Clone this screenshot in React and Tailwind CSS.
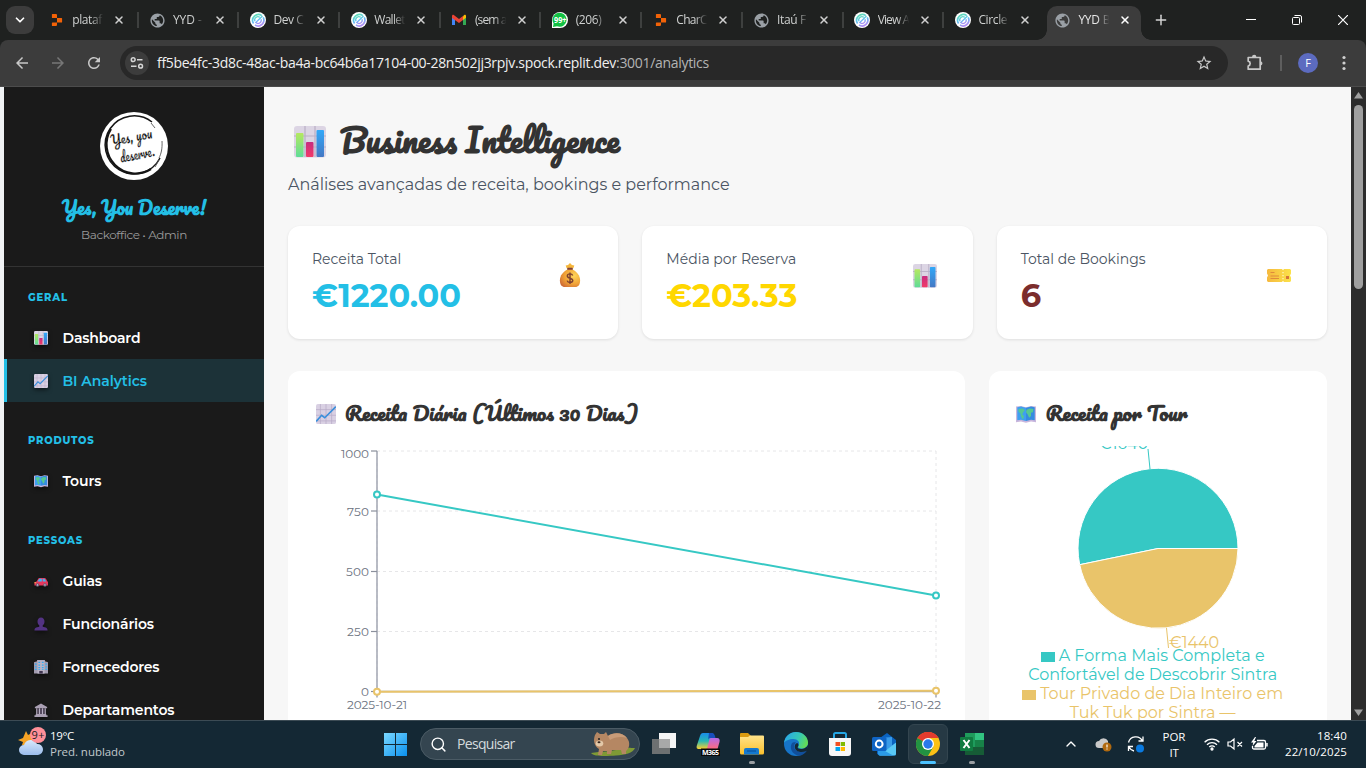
import React, { useLayoutEffect, useRef, useState } from "react";
import { MdPublic, MdArrowBack, MdArrowForward, MdRefresh, MdStarBorder } from "react-icons/md";
import { ChevronDown, ChevronUp, Plus, Search, X } from "lucide-react";

const MONT = "font-['Montserrat','Inter',sans-serif]";
const SEGOE = "font-['Open_Sans','Noto_Sans',sans-serif]";
const SCRIPT = "font-['Pacifico','Liberation_Serif',serif] whitespace-nowrap";

/* Text spaced so that its run is exactly w pixels wide */
function Fit({ w, className = "", children }) {
  const ref = useRef(null);
  const [gap, setGap] = useState(0);
  useLayoutEffect(() => {
    const el = ref.current;
    el.style.letterSpacing = "0px";
    const natural = el.getBoundingClientRect().width;
    const next = (w - natural) / Math.max(1, el.textContent.length - 0.5);
    el.style.letterSpacing = next + "px";
    setGap(next);
  }, [w]);
  return (
    <span ref={ref} className={"inline-block whitespace-nowrap " + className} style={{ letterSpacing: gap + "px" }}>
      {children}
    </span>
  );
}

/* ---------- emoji ---------- */
function BarsEmoji({ className }) {
  return (
    <svg viewBox="0 0 32 32" className={className}>
      <rect width="32" height="31.5" rx="3" fill="#dcd5e4" />
      <path d="M11 0v31M21 0v31M0 10h32M0 21h32" stroke="#b9b0c6" strokeWidth="1.2" />
      <linearGradient id="gr" x1="0" y1="0" x2="0" y2="1"><stop stopColor="#b5e860" /><stop offset="1" stopColor="#5fdc98" /></linearGradient>
      <linearGradient id="pk" x1="0" y1="0" x2="0" y2="1"><stop stopColor="#c72c80" /><stop offset="1" stopColor="#f23a68" /></linearGradient>
      <linearGradient id="bl" x1="0" y1="0" x2="0" y2="1"><stop stopColor="#32a8f8" /><stop offset="1" stopColor="#4478c4" /></linearGradient>
      <rect x="2" y="7" width="7.5" height="24" rx="1" fill="url(#gr)" />
      <rect x="12" y="16" width="7.5" height="15" rx="1" fill="url(#pk)" />
      <rect x="22.5" y="4" width="7.5" height="27" rx="1" fill="url(#bl)" />
    </svg>
  );
}
function LineEmoji({ className }) {
  return (
    <svg viewBox="0 0 32 32" className={className}>
      <rect width="32" height="32" rx="3" fill="#d9d0e3" />
      <path d="M7 0v32M16 0v32M25 0v32M0 9h32M0 18h32M0 27h32" stroke="#b8acc8" strokeWidth="1.2" />
      <path d="M1 27 9 18l5 4L31 5" fill="none" stroke="#3a8fdb" strokeWidth="2.6" strokeLinecap="round" />
    </svg>
  );
}
function MapEmoji({ className }) {
  return (
    <svg viewBox="0 0 32 32" className={className}>
      <path d="M0 4l8-1 8 2 8-2 8 1v25l-8-1-8 2-8-2-8 1z" fill="#c9b6dc" />
      <path d="M2 5l6-1 8 2v21l-8-2-6 1z" fill="#3f9ff0" />
      <path d="M16 6l8-2 6 1v21l-6-1-8 2z" fill="#358ce0" />
      <path d="M4 8l7-1 3 3-3 4-1 3 3 2-2 6-3-5-1-5-3-3zM17 9l5-2 6 1-1 5-3 1 0 5-3 3-2-5-3-4z" fill="#55c892" />
    </svg>
  );
}
function BagEmoji({ className }) {
  return (
    <svg viewBox="0 0 22 26" className={className}>
      <radialGradient id="bag" cx=".7" cy=".35" r=".8"><stop stopColor="#ffd65a" /><stop offset=".6" stopColor="#f0a136" /><stop offset="1" stopColor="#cf6c35" /></radialGradient>
      <path d="M11 0l2 2 2.500.5-1 3h-7l-1-3L9 2z" fill="#f5b63c" />
      <rect x="8" y="5" width="6" height="2.500" rx="1" fill="#804138" />
      <path d="M8 7h6c4 2 7.500 6 7.500 11 0 5-2 7-5 7h-11c-3 0-5-2-5-7C.5 13 4 9 8 7z" fill="url(#bag)" />
      <path d="M13.800 13c-.5-1.300-1.500-1.700-2.800-1.700-1.700 0-2.800.8-2.800 2.200 0 3 5.700 1.700 5.700 4.500 0 1.500-1.200 2.300-2.900 2.300-1.600 0-2.700-.8-3-2M11 9.800v12" fill="none" stroke="#7d4030" strokeWidth="1.500" />
    </svg>
  );
}
function TicketEmoji({ className }) {
  return (
    <svg viewBox="0 0 24 13" className={className}>
      <linearGradient id="tk"><stop stopColor="#f6b93f" /><stop offset="1" stopColor="#fbe249" /></linearGradient>
      <path d="M1 0h14l1 1.200L17 0h6l1 1v3.500l-1 2 1 2V12l-1 1h-6l-1-1.200L15 13H1l-1-1V8.500l1-2-1-2V1z" fill="url(#tk)" />
      <path d="M3.500 3.500h4M3.500 7h8.500M3.500 9.500h8.500" stroke="#df8a3c" strokeWidth="1.200" />
      <path d="M16 3v1.300M16 6v1.300M16 9v1.300" stroke="#fff6c8" strokeWidth="1.200" />
      <rect x="19" y="7" width="3" height="3" fill="#d6743a" />
    </svg>
  );
}
function CarEmoji({ className }) {
  return (
    <svg viewBox="0 0 32 32" className={className}>
      <path d="M1 19l5-2 4-7c1-1 2-1 4-1h10c3 0 4 2 6 7l2 2v8H1z" fill="#e8365c" />
      <path d="M8 17l4-6h6v6zM20 11h4l4 6h-8z" fill="#45b3f2" />
      <circle cx="8" cy="25" r="4" fill="#6b5d7a" /><circle cx="8" cy="25" r="1.500" fill="#ddd" />
      <circle cx="25" cy="25" r="4" fill="#6b5d7a" /><circle cx="25" cy="25" r="1.500" fill="#ddd" />
      <path d="M1 20h4" stroke="#ffc94d" strokeWidth="2" />
    </svg>
  );
}
function PersonEmoji({ className }) {
  return (
    <svg viewBox="0 0 32 32" className={className}>
      <path d="M16 1c5 0 8 4 8 9s-2 7-4 9v3l7 2c3 1 4 4 4 7H1c0-3 1-6 4-7l7-2v-3c-2-2-4-4-4-9s3-9 8-9z" fill="#533383" />
    </svg>
  );
}
function OfficeEmoji({ className }) {
  return (
    <svg viewBox="0 0 32 32" className={className}>
      <path d="M0 5l7-2V0h18v3l7 2v26H0z" fill="#a29baf" />
      <path d="M8 1h16v30H8z" fill="#bbb4c6" />
      <path d="M2 8h4v3H2zM2 14h4v3H2zM2 20h4v3H2zM10 4h4v3h-4zM18 4h4v3h-4zM10 10h4v3h-4zM18 10h4v3h-4zM10 16h4v3h-4zM18 16h4v3h-4zM26 8h4v3h-4zM26 14h4v3h-4zM26 20h4v3h-4zM10 21h4v2h-4zM18 21h4v2h-4z" fill="#31aaf2" />
      <path d="M12 25h8v6h-8z" fill="#403650" />
    </svg>
  );
}
function BankEmoji({ className }) {
  return (
    <svg viewBox="0 0 32 32" className={className}>
      <path d="M16 1l14 8v3H2V9zM1 28h30v4H1zM4 25h24v3H4z" fill="#aaa0b4" />
      <path d="M5 12h3v13H5zM11 12h3v13h-3zM18 12h3v13h-3zM24 12h3v13h-3z" fill="#b7aec2" />
      <path d="M8 12h3v13H8zM14 12h4v13h-4zM21 12h3v13h-3z" fill="#5d5068" />
    </svg>
  );
}

/* ---------- favicons ---------- */
const Replit = () => (
  <svg viewBox="0 0 16 16" className="size-4">
    <path d="M3.500 2H7a1 1 0 0 1 1 1v3H3.500a.6.6 0 0 1-.6-.6V2.600a.6.6 0 0 1 .6-.6zM8 6h4.500a.6.6 0 0 1 .6.6v3.300a.6.6 0 0 1-.6.6H8zM3.500 10.500H8V13a1 1 0 0 1-1 1H3.500a.6.6 0 0 1-.6-.6v-2.300a.6.6 0 0 1 .6-.6z" fill="#f26207" />
  </svg>
);
const Globe = () => <MdPublic className="size-[17px] text-[#9aa0a6]" />;
const CircleLogo = () => (
  <svg viewBox="0 0 16 16" className="size-4">
    <linearGradient id="cl" x1=".2" y1="0" x2=".6" y2="1"><stop stopColor="#62e0b4" /><stop offset=".5" stopColor="#5fc0f2" /><stop offset="1" stopColor="#b08af5" /></linearGradient>
    <circle cx="8" cy="8" r="8" fill="#fff" />
    <path d="M3.600 11.500A5.800 5.800 0 0 1 11.800 3.600M13.200 5.400A5.800 5.800 0 0 1 5 13" fill="none" stroke="url(#cl)" strokeWidth="1.700" />
    <path d="M5 9.200a3.200 3.200 0 0 1 4.800-3.900M11 7.200a3.200 3.200 0 0 1-5.200 3.400L12.500 4" fill="none" stroke="url(#cl)" strokeWidth="1.300" />
  </svg>
);
const Gmail = () => (
  <svg viewBox="0 0 16 16" className="size-4">
    <path d="M1 4v9h3V6z" fill="#4285f4" /><path d="M15 4v9h-3V6z" fill="#34a853" />
    <path d="M12 4.200 13.200 3C14.300 2.400 15 3 15 4.200v1.600l-3 2.300z" fill="#fbbc04" />
    <path d="M1 4.200C1 3 1.800 2.400 2.800 3L8 7l4-3v4.100L8 11 1 5.900z" fill="#ea4335" />
  </svg>
);
const Whats = () => (
  <svg viewBox="0 0 16 16" className="size-4">
    <path d="M0 16V8a8 8 0 1 1 8 8z" fill="#fff" />
    <path d="M1 15l.6-3.500A7 7 0 1 1 5 14.300z" fill="#12c143" />
    <text x="2" y="10.800" textLength="12.500" lengthAdjust="spacingAndGlyphs" className="font-['Open_Sans',sans-serif] text-[8px] font-bold" fill="#fff">99+</text>
  </svg>
);

const TABS = [
  [Replit, "plataf", 30], [Globe, "YYD -", 29], [CircleLogo, "Dev C", 30], [CircleLogo, "Wallet", 31],
  [Gmail, "(sem a", 32], [Whats, "(206)", 26], [Replit, "CharC", 31], [Globe, "Itaú F", 29],
  [CircleLogo, "View A", 32], [CircleLogo, "Circle", 29],
];

function TabBody({ Icon, label, w, active }) {
  return (
    <>
      <span className="flex w-[17px] shrink-0 justify-center"><Icon /></span>
      <span className={"ml-[7px] w-8 shrink-0 overflow-hidden text-[12px] leading-5 [mask-image:linear-gradient(90deg,#000_60%,transparent_98%)] " + (active ? "text-[#e8e8e8]" : "text-[#cfd1d0]")}>
        <Fit w={w}>{label}</Fit>
      </span>
      <X className={"ml-[9px] size-3 shrink-0 " + (active ? "text-white" : "text-[#d0d0d0]")} strokeWidth={3} />
    </>
  );
}

function Browser() {
  return (
    <header className={"shrink-0 bg-[#1f2120] " + SEGOE}>
      <div className="flex h-10 items-stretch">
        <div className="flex w-[38px] shrink-0 items-center pl-1.5">
          <span className="flex size-7 items-center justify-center rounded-[9px] bg-[#3c3c3c]"><ChevronDown className="size-3.5 text-white" strokeWidth={3} /></span>
        </div>
        {TABS.map(([Icon, label, w], i) => (
          <div key={i} className="flex w-[100.700px] shrink-0 items-center pl-[10.200px]">
            <TabBody Icon={Icon} label={label} w={w} />
            {i < 9 && <i className="ml-auto h-4 w-0.5 bg-[#3e403f]" />}
          </div>
        ))}
        <div className="relative mt-1.5 ml-[2px] flex w-[94px] shrink-0 items-center rounded-t-[10px] bg-[#3c3c3c] pb-1.5 pl-[7.500px]">
          <i className="absolute bottom-0 -left-2.5 size-2.5 bg-[radial-gradient(circle_at_0_0,transparent_9.500px,#3c3c3c_10px)]" />
          <TabBody Icon={Globe} label="YYD B" w={32} active />
          <i className="absolute -right-2.5 bottom-0 size-2.5 bg-[radial-gradient(circle_at_100%_0,transparent_9.500px,#3c3c3c_10px)]" />
        </div>
        <div className="flex flex-1 items-center pl-3"><Plus className="size-4 text-[#d5d5d5]" strokeWidth={2.2} /></div>
        <div className="flex items-center">
          <svg viewBox="0 0 10 10" className="mr-[36px] size-2.5"><path d="M0 4.500h10" stroke="#fff" /></svg>
          <svg viewBox="0 0 10 10" className="mr-[36px] size-2.5 overflow-visible" fill="none" stroke="#fff"><rect x=".5" y="2.500" width="7" height="7" rx="1" /><path d="M2.500.5h5.500a1.500 1.500 0 0 1 1.500 1.500V7.500" /></svg>
          <svg viewBox="0 0 10 10" className="mr-[18px] size-2.5"><path d="M0 0l10 10M10 0L0 10" stroke="#fff" strokeWidth="1.200" /></svg>
        </div>
      </div>
      <div className="flex h-[47px] items-center rounded-t-lg border-b border-[#4c4c4c] bg-[#3c3c3c] pl-[13px]">
        <MdArrowBack className="size-[18px] text-[#c8c8c8]" />
        <MdArrowForward className="ml-[18px] size-[18px] text-[#777]" />
        <MdRefresh className="ml-[18px] size-[18px] text-[#c8c8c8]" />
        <div className="ml-[17px] flex h-[34px] w-[1108px] items-center rounded-full bg-[#282828] pl-[5px]">
          <span className="flex size-6 items-center justify-center rounded-full bg-[#3c3c3c]">
            <svg viewBox="0 0 14 14" className="size-3.5" fill="none" stroke="#d5d5d5" strokeWidth="1.500"><circle cx="3.200" cy="3.700" r="1.900" /><path d="M7 3.700h5.500M1 10.200h5.500" /><circle cx="10.600" cy="10.200" r="1.900" /></svg>
          </span>
          <span className="ml-2 text-[14px] leading-5 text-[#f0f0f0]"><Fit w={552}>ff5be4fc-3d8c-48ac-ba4a-bc64b6a17104-00-28n502jj3rpjv.spock.replit.dev<span className="text-[#b4b4b4]">:3001/analytics</span></Fit></span>
          <MdStarBorder className="mr-[15px] ml-auto size-[18px] text-[#c8c8c8]" />
        </div>
        <svg viewBox="0 0 18 18" className="ml-[18px] size-[18px]" fill="none" stroke="#c8c8c8" strokeWidth="1.700" strokeLinejoin="round">
          <path d="M2.200 3.500H14.200V15.200H2.200V12c2.600-.6 2.600-4.200 0-4.800z" />
          <path d="M6 3a2.200 2.200 0 0 1 4.400 0zM14.700 7.200a2.200 2.200 0 0 1 0 4.300z" fill="#c8c8c8" stroke="none" />
        </svg>
        <i className="ml-4 h-4 w-0.5 bg-[#5e5e5e]" />
        <span className="ml-4 flex size-5 items-center justify-center rounded-full bg-[#5c6bc0] text-[11px] text-white">F</span>
        <svg viewBox="0 0 4 16" className="ml-6 h-4 w-1" fill="#d0d0d0"><circle cx="2" cy="2.500" r="1.600" /><circle cx="2" cy="8" r="1.600" /><circle cx="2" cy="13.500" r="1.600" /></svg>
      </div>
    </header>
  );
}

/* ---------- sidebar ---------- */
const NAV = [
  { t: "GERAL", w: 39.5, items: [[BarsEmoji, "Dashboard", 78], [LineEmoji, "BI Analytics", 84.5, true]] },
  { t: "PRODUTOS", w: 66, items: [[MapEmoji, "Tours", 39]] },
  { t: "PESSOAS", w: 54.500, items: [[CarEmoji, "Guias", 39.5], [PersonEmoji, "Funcionários", 91.5], [OfficeEmoji, "Fornecedores", 97], [BankEmoji, "Departamentos", 112]] },
];

function Sidebar() {
  return (
    <aside className={"w-[260px] shrink-0 overflow-hidden bg-[#1a1a1a] " + MONT}>
      <div className="flex h-[180px] flex-col items-center border-b border-[#333] pt-[25px]">
        <svg viewBox="0 0 68 68" className="size-[68px]">
          <circle cx="34" cy="34" r="34" fill="#fff" />
          <path d="M52 10A29 29 0 1 0 60 46" fill="none" stroke="#151515" strokeWidth="1.500" />
          <path d="M11 17a29 29 0 0 0 40 40" fill="none" stroke="#151515" strokeWidth="2.200" />
          <path d="M51 11l4 5M62 29c.5 8-1 13-3 17M59 48l-4 7" fill="none" stroke="#555" strokeWidth=".9" />
          <g transform="rotate(-11 34 34)" className="font-['Pacifico','Liberation_Serif',serif] text-[14px]" fill="#0a0a0a" stroke="#fff" strokeWidth=".25">
            <text x="12" y="30" textLength="42" lengthAdjust="spacingAndGlyphs">Yes, you</text>
            <text x="18" y="48" textLength="35" lengthAdjust="spacingAndGlyphs">deserve.</text>
          </g>
        </svg>
        <div className={"mt-[14px] h-7 text-[18px] leading-7 font-bold text-[#23bfe6] " + SCRIPT}>Yes, You Deserve!</div>
        <div className="mt-[5px] text-[12px] leading-4 text-[#9a9a9a]"><Fit w={106}>Backoffice • Admin</Fit></div>
      </div>
      {NAV.map((s, k) => (
        <section key={s.t} className={k ? "pt-[31px]" : "pt-[23px]"}>
          <h4 className="mb-[11px] h-[15px] pl-6 text-[10px] leading-4 font-extrabold text-[#23bfe6]"><Fit w={s.w}>{s.t}</Fit></h4>
          {s.items.map(([Icon, label, w, on]) => (
            <div key={label} className={"flex h-[43px] items-center border-l-[3px] pl-[27px] text-[14px] font-[560] " + (on ? "border-[#23bfe6] bg-[#1c3238] text-[#23bfe6]" : "border-transparent text-white")}>
              <Icon className="mr-[14.500px] size-3.5 drop-shadow-[0_2px_2px_rgba(0,0,0,0.5)]" />
              <span className="leading-5"><Fit w={w}>{label}</Fit></span>
            </div>
          ))}
        </section>
      ))}
    </aside>
  );
}

/* ---------- main ---------- */
function Stat({ label, value, vw, color, children }) {
  return (
    <div className="flex h-[113px] rounded-xl bg-white pr-6 pl-6 shadow-[0_1px_3px_rgba(0,0,0,0.1)]">
      <div className="pt-[23px]">
        <div className="text-[14px] leading-[21px] text-[#4b5563]">{label}</div>
        <div className={"mt-2 text-[32px] leading-9 font-bold " + color}><Fit w={vw}>{value}</Fit></div>
      </div>
      <div className="ml-auto flex h-[99px] w-12 items-center justify-center">{children}</div>
    </div>
  );
}

function LineChart() {
  const ys = [6, 66, 126.5, 186.5, 246.5];
  const labels = ["1000", "750", "500", "250", "0"];
  const ws = [28, 22, 23, 22, 8];
  return (
    <svg viewBox="0 0 629 274" className="block h-[274px] w-[629px] text-[12px]" fill="none">
      {ys.map((y) => <path key={y} d={`M65 ${y}H624`} stroke="#e6e6e8" strokeDasharray="3 3" />)}
      <path d="M65 6v240M624 6v240" stroke="#e6e6e8" strokeDasharray="3 3" />
      <path d="M65 6v246.500M65 246.500H624v6" stroke="#a2a7b3" strokeWidth="1.500" />
      {ys.map((y, i) => (
        <g key={y}>
          <path d={`M59 ${y}h6`} stroke="#8b909c" strokeWidth="1.200" />
          <text x={57 - ws[i]} y={i ? y + 4.5 : 13} textLength={ws[i]} fill="#6b7280">{labels[i]}</text>
        </g>
      ))}
      <text x="35" y="264" textLength="60" fill="#6b7280">2025-10-21</text>
      <text x="566" y="264" textLength="63" fill="#6b7280">2025-10-22</text>
      <path d="M65 49.500L624 150.500" stroke="#36c8c4" strokeWidth="2" />
      <path d="M65 246.700L624 245.700" stroke="#e9c46a" strokeWidth="2" />
      <g fill="#fff" strokeWidth="2">
        <circle cx="65" cy="49.500" r="3" stroke="#36c8c4" /><circle cx="624" cy="150.500" r="3" stroke="#36c8c4" />
        <circle cx="65" cy="246.700" r="3" stroke="#e9c46a" /><circle cx="624" cy="245.700" r="3" stroke="#e9c46a" />
      </g>
    </svg>
  );
}

function TourPie() {
  return (
    <div className="w-[290px] text-[16px] leading-[19px]">
      <svg viewBox="0 0 290 203" className="block h-[203px] w-[290px] overflow-hidden">
        <path d="M145 102.500H225A80 80 0 1 0 66.700 118.700z" fill="#36c8c4" stroke="#fff" />
        <path d="M145 102.500L66.700 118.700A80 80 0 0 0 225 102.500z" fill="#e9c46a" stroke="#fff" />
        <path d="M137 23L135 3" stroke="#36c8c4" /><path d="M153.500 182L155.500 202" stroke="#e9c46a" />
        <text x="86" y="3" textLength="49" fill="#36c8c4">€1640</text>
        <text x="156" y="202" textLength="50" fill="#e9c46a">€1440</text>
      </svg>
      <div className="-mt-[3px] flex flex-col items-center pr-[10px]">
        <div className="flex items-center text-[#36c8c4]"><i className="mt-0.5 mr-1 h-2.5 w-3.5 bg-[#36c8c4]" /><Fit w={206}>A Forma Mais Completa e</Fit></div>
        <div className="text-[#36c8c4]"><Fit w={249}>Confortável de Descobrir Sintra</Fit></div>
        <div className="flex items-center text-[#e9c46a]"><i className="mt-0.5 mr-1 h-2.5 w-3.5 bg-[#e9c46a]" /><Fit w={243}>Tour Privado de Dia Inteiro em</Fit></div>
        <div className="text-[#e9c46a]"><Fit w={166}>Tuk Tuk por Sintra —</Fit></div>
      </div>
    </div>
  );
}

function Main() {
  const h3 = "-mt-[3px] h-6 text-[20px] leading-6 font-bold text-[#333] " + SCRIPT;
  return (
    <main className={"flex-1 overflow-hidden bg-[#f7f7f7] px-6 pt-[31px] " + MONT}>
      <div className="flex h-12 items-center pl-1.5">
        <BarsEmoji className="size-8" />
        <h1 className={"ml-[14px] pb-[6px] text-[32px] leading-[48px] font-bold text-[#333] " + SCRIPT}>Business Intelligence</h1>
      </div>
      <p className="mt-[7px] h-6 text-[16px] leading-6 text-[#4b5563]">Análises avançadas de receita, bookings e performance</p>
      <div className="mt-[29px] grid grid-cols-3 gap-6">
        <Stat label="Receita Total" value="€1220.00" vw={149} color="text-[#23bfe6]"><BagEmoji className="h-[25px] w-[22px]" /></Stat>
        <Stat label="Média por Reserva" value="€203.33" vw={131} color="text-[#ffd700]"><BarsEmoji className="size-6" /></Stat>
        <Stat label="Total de Bookings" value="6" vw={20} color="text-[#7b2d2d]"><TicketEmoji className="h-[13px] w-6" /></Stat>
      </div>
      <div className="mt-8 grid grid-cols-[minmax(0,2fr)_minmax(0,1fr)] gap-6">
        <div className="h-[500px] rounded-xl bg-white px-6 pt-[31px]">
          <div className="mb-5 flex h-6 items-center pl-1"><LineEmoji className="mr-[9px] size-5" /><h3 className={h3}>Receita Diária (Últimos 30 Dias)</h3></div>
          <div className="-mt-px"><LineChart /></div>
        </div>
        <div className="h-[500px] rounded-xl bg-white px-6 pt-[31px]">
          <div className="mb-5 flex h-6 items-center pl-[3px]"><MapEmoji className="mr-[10px] size-5" /><h3 className={h3}>Receita por Tour</h3></div>
          <TourPie />
        </div>
      </div>
    </main>
  );
}

/* ---------- taskbar ---------- */
const cell = "relative flex h-10 w-11 shrink-0 items-center justify-center";
function Taskbar() {
  return (
    <footer className={"flex h-12 shrink-0 items-center border-t border-[#3c4b54] bg-[#142834] pb-px text-white " + SEGOE}>
      <div className="flex w-[384px] shrink-0 items-center pl-[18px]">
        <svg viewBox="0 0 30 32" className="-mt-1 h-8 w-[30px]">
          <path d="M8 5l2 4 4-2 1 5-3 7-8 0 1-3-5-2 5-2z" fill="#f5a325" />
          <linearGradient id="cd" x1="0" y1="0" x2="0" y2="1"><stop stopColor="#d9e8fb" /><stop offset="1" stopColor="#9abcec" /></linearGradient>
          <path d="M6 29a5 5 0 0 1 0-10 7 7 0 0 1 13-1 5.500 5.500 0 0 1 1 11z" fill="url(#cd)" />
          <circle cx="20" cy="9" r="8" fill="#ff8f98" />
          <text x="13.500" y="13" textLength="13" className="text-[11px]" fill="#222">9+</text>
        </svg>
        <div className="ml-0.5 text-[11.500px] leading-4"><div><Fit w={24}>19°C</Fit></div><div className="text-[#c1c8cc]"><Fit w={75}>Pred. nublado</Fit></div></div>
      </div>
      <svg viewBox="0 0 23 23" className="size-[23px]">
        <linearGradient id="wn" x1="0" y1="0" x2="1" y2="1"><stop stopColor="#7ad8ff" /><stop offset="1" stopColor="#0a90ee" /></linearGradient>
        <path d="M0 0h11v11H0zM12 0h11v11H12zM0 12h11v11H0zM12 12h11v11H12z" fill="url(#wn)" />
      </svg>
      <div className="ml-[13px] flex h-8 w-[220px] shrink-0 items-center rounded-full border border-[#4b5b65] bg-[#344550] pl-[9px]">
        <Search className="size-[17px] text-white" />
        <span className="ml-2.5 pb-0.5 text-[14px] text-[#d5dadd]"><Fit w={58}>Pesquisar</Fit></span>
        <svg viewBox="0 0 46 26" className="mr-[3px] ml-auto h-[26px] w-[46px]">
          <path d="M1 22c10-2 20-1 28-4 6-2 12-1 16-1-2 5-10 7-19 7.500C17 25 4 26 1 22z" fill="#7f9a35" />
          <path d="M5 4l2-3 3 2 4 0 2-2 2 4c5-4 15-4 19 2 4 5 2 11-1 13l0 3h-4l-1-4-9 0-1 4h-4l0-3-4 0-1 4H8l1-6c-5-3-6-9-4-14z" fill="#b58763" />
          <path d="M18 5c5-4 15-4 19 2-5-2-13-1-17 2z" fill="#c99c78" />
          <circle cx="9" cy="8" r="1" fill="#222" /><ellipse cx="9.500" cy="12.500" rx="3.800" ry="3" fill="#e3c8a8" /><ellipse cx="9" cy="11.300" rx="1.500" ry="1" fill="#33231c" />
        </svg>
      </div>
      <div className="ml-0.5 flex">
        <div className={cell}><svg viewBox="0 0 24 24" className="size-6"><path d="M7 1h17v15H7z" fill="#f5f5f5" /><path d="M0 7h18v15H0z" fill="#7a7a7a" fillOpacity=".88" /><path d="M7 7h11v9H7z" fill="#a8a8a8" /></svg></div>
        <div className={cell}>
          <svg viewBox="0 0 24 24" className="size-6">
            <linearGradient id="c1" x1="0" y1="0" x2="0" y2="1"><stop stopColor="#1a8dea" /><stop offset=".5" stopColor="#27b8b5" /><stop offset="1" stopColor="#ffd02c" /></linearGradient>
            <linearGradient id="c2" x1="0" y1="0" x2="0" y2="1"><stop stopColor="#b36be8" /><stop offset="1" stopColor="#ff6b7b" /></linearGradient>
            <path d="M7 1h8c2 0 3 2 2 4l-3 9c-1 2-2 3-4 3H3c-2 0-3-1-2-4l3-9c.5-2 1.500-3 3-3z" fill="url(#c1)" />
            <path d="M13 1h3c2 0 3 2 3.500 5H14c-1 0-2 1-2 2z" fill="#174ebc" />
            <path d="M15 6h6c2.500 0 3 2 2.500 4l-2 7H11l2-8c.4-2 1-3 2-3z" fill="url(#c2)" />
            <rect x="5" y="16.500" width="19" height="7.500" fill="#080808" /><text x="6" y="22.700" textLength="17" className="text-[7px] font-bold" fill="#fff">M365</text>
          </svg>
        </div>
        <div className={cell}>
          <svg viewBox="0 0 24 24" className="size-6"><path d="M0 2q0-1 1-1h7l3 3v4H0z" fill="#d99a10" /><linearGradient id="fd" x1="0" y1="0" x2="0" y2="1"><stop stopColor="#ffe38a" /><stop offset="1" stopColor="#fbc02c" /></linearGradient><path d="M0 5h8l2-1.500h13q1 0 1 1V21q0 1.500-1.500 1.500h-21Q0 22.500 0 21z" fill="url(#fd)" /><path d="M4 22.500V18q0-2 2-2h11q2 0 2 2v4.500z" fill="#1479d0" /><path d="M7 19h9" stroke="#0b5aa8" strokeWidth="1.500" /></svg>
          <i className="absolute bottom-0 h-[3px] w-1.5 rounded-full bg-[#9a9fa3]" />
        </div>
        <div className={cell}>
          <svg viewBox="0 0 24 24" className="size-6">
            <linearGradient id="e1" x1="0" y1=".2" x2="1" y2=".5"><stop stopColor="#2aa6ea" /><stop offset=".6" stopColor="#35c8b6" /><stop offset="1" stopColor="#64dc55" /></linearGradient>
            <circle cx="12" cy="12" r="12" fill="#1674c9" />
            <path d="M0 11C1 4 6 0 12 0c7 0 12 5 12 10.500 0 4-3 6-6.500 6-3 0-4-1-3-2.500 2-4-1-7-5-7C5 7 1 9 0 11z" fill="url(#e1)" />
            <path d="M8 11c-3 5 0 11 6 12.500 4 .5 7-2 9-5-7 3-13 0-13-4 0-2 1-3 2-4-1.500-.5-3-.5-4 .5z" fill="#114f9b" />
            <path d="M14 14.500c-1 1 0 3 4 2.500 3-.4 5-2 5.700-4 .5 2 0 4-1 5.700-6 3-12 .3-12-4 0-2 1-3 2.500-3.700 1.500 1 1.500 2.500.8 3.500z" fill="#142834" />
          </svg>
        </div>
        <div className={cell}>
          <svg viewBox="0 0 24 24" className="size-6"><path d="M6 7V2.500Q6 1 7.500 1h9Q18 1 18 2.500V7" fill="none" stroke="#25a7e5" strokeWidth="2" /><path d="M1 6h22v15q0 3-3 3H4q-3 0-3-3z" fill="#f7f7f7" /><path d="M7.500 10H12v4H7.500z" fill="#f25022" /><path d="M12.700 10H17v4h-4.300z" fill="#7fba00" /><path d="M7.500 15H12v4H7.500z" fill="#00a4ef" /><path d="M12.700 15H17v4h-4.300z" fill="#ffb900" /></svg>
        </div>
        <div className={cell}>
          <svg viewBox="0 0 24 24" className="size-6"><path d="M5 8L15 1l9 7v14q0 1.500-2 1.500H8q-2 0-3-2z" fill="#0a63c0" /><path d="M8 6l12-1v9l-7 5-6-4z" fill="#3a9be8" /><path d="M24 10v12q0 1.500-2 1.500H7l17-13z" fill="#58c8f5" /><path d="M6 15l15 8.500H8q-2 0-2-2z" fill="#2b9ae6" /><rect y="5" width="14.500" height="14" rx="1.500" fill="#0f64c4" /><circle cx="7.200" cy="12" r="3.400" fill="none" stroke="#fff" strokeWidth="2" /></svg>
        </div>
        <div className={cell}>
          <i className="absolute inset-x-0.5 inset-y-0 rounded-md border border-[#33454f] bg-[#263944]" />
          <svg viewBox="0 0 24 24" className="relative size-6"><circle cx="12" cy="12" r="12" fill="#fbc116" /><path d="M12 12L1.600 6A12 12 0 0 1 22.400 6z" fill="#e33b2e" /><path d="M1.600 6A12 12 0 0 0 12 24l5.200-9L12 12z" fill="#229342" /><path d="M12 6h10.400L20 12h-3z" fill="#fbc116" /><path d="M1.600 6A12 12 0 0 1 22.400 6H12L7 9z" fill="#e33b2e" /><circle cx="12" cy="12" r="6" fill="#fff" /><circle cx="12" cy="12" r="4.700" fill="#2a79ea" /></svg>
          <i className="absolute bottom-0 h-[3px] w-4 rounded-full bg-[#4cc2ff]" />
        </div>
        <div className={cell}>
          <svg viewBox="0 0 24 24" className="size-6"><path d="M5 1h19v21H5z" fill="#1f9c5c" /><path d="M15 1h9v7h-9z" fill="#32c481" /><path d="M15 8h9v7h-9z" fill="#178248" /><path d="M5 15h19v8H5z" fill="#165c36" /><rect y="5" width="13" height="14" rx="1" fill="#107c41" /><path d="M3.500 8l6 8M9.500 8l-6 8" stroke="#fff" strokeWidth="2" /></svg>
          <i className="absolute bottom-0 h-[3px] w-1.5 rounded-full bg-[#9a9fa3]" />
        </div>
      </div>
      <div className="ml-auto flex items-center pr-[19px] text-[11.500px] leading-4">
        <ChevronUp className="size-4" />
        <svg viewBox="0 0 17 16" className="ml-4 h-4 w-[17px]"><path d="M4 12a3.500 3.500 0 0 1 0-7 5 5 0 0 1 9 0v7z" fill="#c9c9c9" /><circle cx="12" cy="11" r="4.500" fill="#b0690f" /><path d="M12 8.500v3M12 12.500v1" stroke="#fff" strokeWidth="1.200" /></svg>
        <svg viewBox="0 0 18 18" className="ml-[15px] size-[18px]" fill="none" stroke="#fff" strokeWidth="1.300"><path d="M1.500 7.500A7.500 7.500 0 0 1 15.500 6M16 1.500V6h-4.500M7 16A7.500 7.500 0 0 1 2 12M1.500 16v-4.500H6" /><circle cx="13" cy="13.500" r="4" fill="#0a7ae0" stroke="none" /></svg>
        <div className="ml-[17px] w-6 pt-px text-center"><div><Fit w={23}>POR</Fit></div><div><Fit w={9}>IT</Fit></div></div>
        <svg viewBox="0 0 16 14" className="ml-[18px] h-3.5 w-4" fill="none" stroke="#fff" strokeWidth="1.300"><path d="M.6 5.200a10.500 10.500 0 0 1 14.800 0M3 7.700a7 7 0 0 1 10 0M5.300 10a3.800 3.800 0 0 1 5.400 0" /><circle cx="8" cy="12" r="1" fill="#fff" /></svg>
        <svg viewBox="0 0 16 14" className="ml-[7px] h-3.5 w-4" fill="none" stroke="#fff" strokeWidth="1.200"><path d="M1 5h2.500L7 2v10L3.500 9H1zM10.500 5l4.500 4.500M15 5l-4.500 4.500" /></svg>
        <svg viewBox="0 0 17 14" className="ml-2 h-3.5 w-[17px]"><path d="M6 3.500h7q1.500 0 1.500 1.500v5.500q0 1.500-1.500 1.500H3q-1.500 0-1.500-1.500V9" fill="none" stroke="#fff" strokeWidth="1.300" /><path d="M6.500 5.500h6v5h-9V9zM15.200 6h1.500v3.500h-1.500zM4 0L0 5.500h2.300L1.500 9l4-5H3.300L5 0z" fill="#fff" /></svg>
        <div className="ml-[17px] text-right"><div><Fit w={30}>18:40</Fit></div><div><Fit w={62}>22/10/2025</Fit></div></div>
      </div>
    </footer>
  );
}

export default function App() {
  return (
    <div className="flex h-[768px] w-[1366px] flex-col overflow-hidden">
      <Browser />
      <div className="flex h-[633px] shrink-0">
        <div className="w-1 shrink-0 bg-[#f0f2f4]" />
        <Sidebar />
        <Main />
        <div className="flex w-[15px] shrink-0 flex-col items-center bg-[#2c2c2c] pt-[5px]">
          <svg viewBox="0 0 9 7" className="h-[7px] w-[9px]"><path d="M4.500 0L9 6.500H0z" fill="#9f9f9f" /></svg>
          <i className="mt-1.5 h-[184px] w-[9px] rounded-full bg-[#9f9f9f]" />
          <svg viewBox="0 0 9 7" className="mt-auto mb-1 h-[7px] w-[9px]"><path d="M4.500 7L9 .5H0z" fill="#9f9f9f" /></svg>
        </div>
      </div>
      <Taskbar />
    </div>
  );
}
